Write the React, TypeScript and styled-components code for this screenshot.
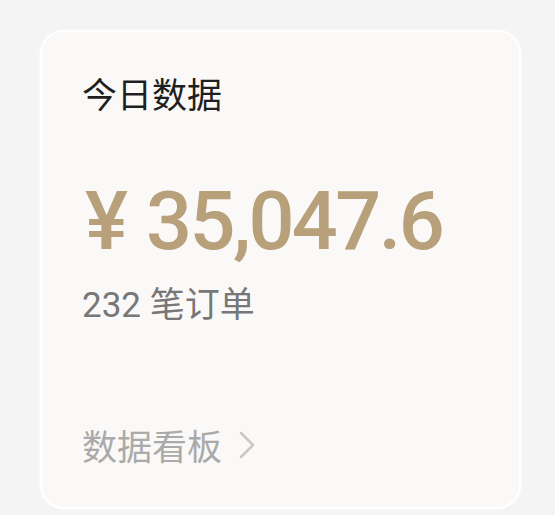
import React from 'react';
import styled, { createGlobalStyle } from 'styled-components';

const GlobalStyle = createGlobalStyle`
  html, body {
    margin: 0;
    padding: 0;
    background: #f4f4f4;
  }
  body {
    font-family: Roboto, "Noto Sans CJK SC", sans-serif;
  }
`;

const Page = styled.div`
  width: 555px;
  height: 515px;
  box-sizing: border-box;
  padding: 30px 34px 6px 40px;
  overflow: hidden;
`;

const Card = styled.section`
  height: 100%;
  box-sizing: border-box;
  background: #faf9f7;
  border: 2px solid #ffffff;
  border-radius: 24px;
  box-shadow: 0 0 3px rgba(255, 255, 255, 0.9);
  padding: 37px 40px 0 40px;
  display: flex;
  flex-direction: column;
`;

const Title = styled.h2`
  margin: 0;
  font-family: "Noto Sans CJK SC", sans-serif;
  font-weight: 400;
  font-size: 35px;
  line-height: 48px;
  color: #1f1f1f;
`;

const Amount = styled.div`
  margin-top: 60px;
  display: flex;
  align-items: baseline;
  font-family: Roboto, "Noto Sans CJK SC", sans-serif;
  font-weight: 500;
  font-size: 81px;
  line-height: 90px;
  color: #b7a07a;
  white-space: nowrap;
`;

const Currency = styled.span`
  margin-left: 3px;
  margin-right: 18px;
`;

const Digits = styled.span`
  letter-spacing: -2.6px;
`;

const Orders = styled.div`
  margin-top: 15px;
  font-family: Roboto, "Noto Sans CJK SC", sans-serif;
  font-size: 35px;
  line-height: 48px;
  color: #777;
`;

const Link = styled.div`
  margin-top: 91px;
  display: flex;
  align-items: center;
  gap: 16px;
  font-family: "Noto Sans CJK SC", sans-serif;
  font-size: 35px;
  line-height: 48px;
  color: #aaa;
`;

const Chevron = () => (
  <svg width="18" height="30" viewBox="0 0 18 30" fill="none">
    <path d="M3 3 L15 15 L3 27" stroke="#c8c8c8" strokeWidth="2.5" strokeLinecap="round" strokeLinejoin="round" />
  </svg>
);

export default function App() {
  return (
    <>
      <GlobalStyle />
      <Page>
        <Card>
          <Title>今日数据</Title>
          <Amount>
            <Currency>¥</Currency>
            <Digits>35,047.6</Digits>
          </Amount>
          <Orders>232 笔订单</Orders>
          <Link>
            数据看板
            <Chevron />
          </Link>
        </Card>
      </Page>
    </>
  );
}
